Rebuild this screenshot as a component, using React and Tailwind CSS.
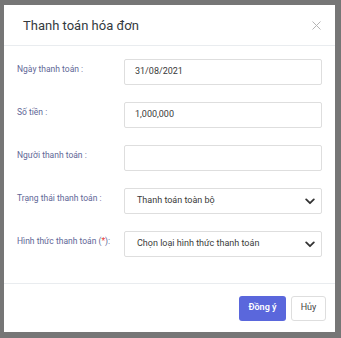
import React from "react";

const rows = [
  { label: "Ngày thanh toán :", value: "31/08/2021" },
  { label: "Số tiền :", value: "1,000,000" },
  { label: "Người thanh toán :", value: "" },
];

function Chevron() {
  return (
    <svg width="10" height="7" viewBox="0 0 10 7" fill="none">
      <path d="M1.2 1.4 L5 5.2 L8.8 1.4" stroke="#333" strokeWidth="1.8" strokeLinecap="round" strokeLinejoin="round" />
    </svg>
  );
}

export default function App() {
  return (
    <div className="w-[341px] h-[338px] bg-[#767676] pt-[5px] pl-[4px] font-['Roboto',sans-serif]">
      <div className="w-[331px] h-[327px] bg-white flex flex-col">
        <div className="h-[41px] flex items-center justify-between pl-[19px] pr-[14px] border-b border-[#e9ecef]">
          <h2 className="text-[13px] text-[#343a40] leading-none">Thanh toán hóa đơn</h2>
          <svg width="9" height="9" viewBox="0 0 9 9">
            <path d="M0.5 0.5 L8.5 8.5 M8.5 0.5 L0.5 8.5" stroke="#b5b5b5" strokeWidth="1" />
          </svg>
        </div>
        <div className="flex-1 flex flex-col gap-[17px] pt-[13px] pl-[13px] pr-[13px]">
          {rows.map((r) => (
            <div key={r.label} className="flex">
              <div className="w-[107px] pt-[4px] text-[8.5px] text-[#5f6797] leading-[12px]">{r.label}</div>
              <div className="w-[198px] h-[26px] border border-[#dedede] rounded-[2px] flex items-center px-[10px] text-[9px] text-[#3a3a3a]">
                {r.value}
              </div>
            </div>
          ))}
          <div className="flex">
            <div className="w-[107px] pt-[4px] text-[8.5px] text-[#5f6797] leading-[12px]">Trạng thái thanh toán :</div>
            <div className="w-[198px] h-[26px] border border-[#dedede] rounded-[2px] flex items-center justify-between pl-[12px] pr-[6px] text-[9px] text-[#3a3a3a]">
              <span>Thanh toán toàn bộ</span>
              <Chevron />
            </div>
          </div>
          <div className="flex">
            <div className="w-[107px] pt-[4px] text-[8.5px] text-[#5f6797] leading-[12px]">
              Hình thức thanh toán (<span className="text-[#e53935]">*</span>):
            </div>
            <div className="w-[198px] h-[26px] border border-[#dedede] rounded-[2px] flex items-center justify-between pl-[12px] pr-[6px] text-[9px] text-[#3a3a3a]">
              <span>Chọn loại hình thức thanh toán</span>
              <Chevron />
            </div>
          </div>
        </div>
        <div className="h-[49px] border-t border-[#e9ecef] flex items-center justify-end gap-[5px] pr-[9px]">
          <button className="w-[47px] h-[25px] rounded-[3px] bg-[#5a67dc] text-white text-[9px] font-semibold">Đồng ý</button>
          <button className="w-[35px] h-[25px] rounded-[3px] border border-[#dedede] bg-white text-[#444] text-[9px]">Hủy</button>
        </div>
      </div>
    </div>
  );
}
